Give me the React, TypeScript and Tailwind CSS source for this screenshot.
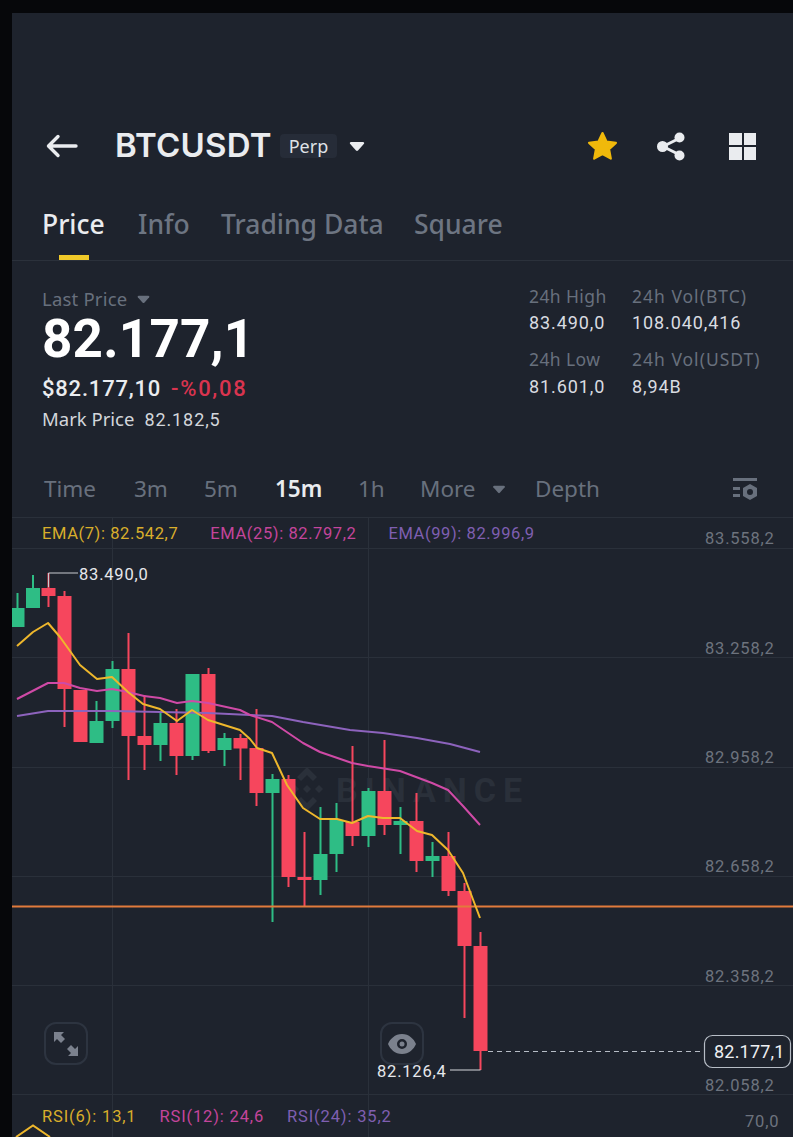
import React from "react";

type C = [number, number, number, number, number, 0 | 1];
const GREEN = "#2ebd85";
const RED = "#f6465d";
// x center, wick top, wick bottom, body top, body bottom, 1 = green
const candles: C[] = [
  [17.5, 593, 627, 608, 627, 1],
  [33, 575, 608, 588, 608, 1],
  [48.5, 573, 607, 588, 596, 0],
  [64.5, 591, 727, 596, 689, 0],
  [80.5, 690, 742, 690, 742, 0],
  [96.5, 701, 743, 721, 743, 1],
  [112.5, 661, 728, 669, 721, 1],
  [128.5, 633, 780, 669, 736, 0],
  [144.5, 695, 770, 736, 745, 0],
  [160.5, 713, 761, 723, 745, 1],
  [176.5, 709, 775, 723, 756, 0],
  [192.5, 674, 760, 674, 756, 1],
  [208.5, 668, 753, 674, 751, 0],
  [224.5, 733, 766, 738, 750, 1],
  [240.5, 734, 780, 738, 748.5, 0],
  [256.5, 709, 806, 748, 793, 0],
  [272.5, 774, 922, 779, 793, 1],
  [288.5, 775, 887, 779, 877, 0],
  [304.5, 832, 907, 877, 880, 0],
  [320.5, 807, 895, 854, 880, 1],
  [336.5, 803, 872, 820, 854, 1],
  [352.5, 746, 846, 822, 836, 0],
  [368.5, 788, 847, 791, 836, 1],
  [384.5, 740, 835, 791, 825, 0],
  [400.5, 807, 854, 821, 825, 1],
  [416.5, 793, 872, 821, 861, 0],
  [432.5, 842, 877, 856, 861, 1],
  [448.5, 832, 896, 856, 891, 0],
  [464.5, 883, 1018, 891, 946, 0],
  [480.5, 932, 1070, 946, 1051, 0],
];

const ema7 =
  "17,646 33,632 48,623 60,637 80,665 97,679 112,677 128,692 143,704 160,709 177,721 192,710 208,720 240,730 250,739 257,748 272,753 287,785 303,808 320,819 337,819 352,823 368,816 383,818 400,818 417,831 432,835 448,850 463,873 480,918";
const ema25 =
  "17,699 48,683 64,683 80,688 97,691 112,689 128,692 144,696 160,698 177,703 192,701 208,703 240,710 250,715 272,722 303,743 320,752 352,763 368,766 400,771 432,783 448,790 463,806 480,825";
const ema99 =
  "17,716 48,711 80,711 112,711 160,712 208,713 250,715 272,716 303,722 350,730 383,733 417,738 450,744 480,752";

const axis: [string, number][] = [
  ["83.558,2", 544],
  ["83.258,2", 654],
  ["82.958,2", 763],
  ["82.658,2", 872],
  ["82.358,2", 982],
  ["82.058,2", 1091],
];

const Caret = ({ className }: { className: string }) => (
  <svg viewBox="0 0 16 11" className={className} fill="currentColor">
    <path d="M2 1h12c1 0 1.500 1 1 1.700L9 9.500c-.6.600-1.400.600-2 0L1 2.700C.5 2 1 1 2 1z" />
  </svg>
);

function Chart() {
  return (
    <svg viewBox="12 517 781 620" className="absolute inset-0 w-[781px] h-[620px]">
      <g stroke="#2a303a" strokeWidth="1">
        <path d="M12 517.500H793M12 548.500H793M12 657.500H793M12 767.500H793M12 876.500H793M12 985.500H793M12 1094.500H793" fill="none" />
        <path d="M112.500 517V1137M368.500 517V1137" fill="none" />
      </g>
      <g fill="#2a303a">
        <path d="M307 767l10 10-4 4-6-6-6 6-4-4zM295 785l4 4-4 4-4-4zM319 785l4 4-4 4-4-4zM307 785l4 4-4 4-4-4zM307 811l-10-10 4-4 6 6 6-6 4 4z" />
        <text x="336" y="802" fontSize="34" fontWeight="700" letterSpacing="7" fontFamily="Roboto, sans-serif">BINANCE</text>
      </g>
      {candles.map(([x, wt, wb, bt, bb, g], i) => (
        <g key={i} fill={g ? GREEN : RED}>
          <rect x={x - 1} y={wt} width="2" height={wb - wt} />
          <rect x={x - 7} y={bt} width="14" height={bb - bt} />
        </g>
      ))}
      <path d="M12 906.500H793" stroke="#e17b3c" strokeWidth="2" fill="none" />
      <polyline points={ema99} fill="none" stroke="#8d63bd" strokeWidth="2" strokeLinejoin="round" />
      <polyline points={ema25} fill="none" stroke="#cf4aa6" strokeWidth="2" strokeLinejoin="round" />
      <polyline points={ema7} fill="none" stroke="#eeb72c" strokeWidth="2" strokeLinejoin="round" />
      <path d="M48.500 587V573H78" fill="none" stroke="#c8ccd2" strokeWidth="1" />
      <path d="M480.500 1070H450" fill="none" stroke="#d5d8dd" strokeWidth="1" />
      <path d="M488 1051.500H704" fill="none" stroke="#b7bdc6" strokeWidth="1" strokeDasharray="5 4" />
      <path d="M16 1137l17-11.500 17 11.500" fill="none" stroke="#eeb72c" strokeWidth="2" />
      <g fontFamily="Roboto, sans-serif" fontSize="16.500" letterSpacing="0.800">
        {axis.map(([t, y]) => (
          <text key={t} x="705" y={y} fill="#6d737e">{t}</text>
        ))}
        <text x="745" y="1127" fill="#6d737e">70,0</text>
        <text x="79" y="580" fill="#e6e8ec">83.490,0</text>
        <text x="377" y="1077" fill="#e6e8ec">82.126,4</text>
      </g>
      <rect x="704.500" y="1035.500" width="86" height="32" rx="8" fill="#1e232d" stroke="#b7bdc6" strokeWidth="1.200" />
      <text x="714" y="1058" fill="#eef0f3" fontSize="18" letterSpacing="0.200" fontFamily="Roboto, sans-serif">82.177,1</text>
    </svg>
  );
}

export default function App() {
  return (
    <div className="w-[793px] h-[1137px] bg-[#06070a] pt-[13px] pl-[12px] overflow-hidden font-['Noto_Sans',sans-serif]">
      <div className="w-[781px] h-[1124px] bg-[#1e232d] flex flex-col">
        {/* header */}
        <div className="mt-[113px] h-[40px] flex items-center pl-[34px] pr-[37px] text-[#eaecef]">
          <svg viewBox="0 0 32 24" className="w-[32px] h-[24px]" fill="none" stroke="currentColor" strokeWidth="3.400" strokeLinecap="round" strokeLinejoin="round">
            <path d="M30 12H3M12 2.500L2.500 12 12 21.500" />
          </svg>
          <span className="ml-[37px] w-[155px] text-[33px] font-semibold tracking-[0.2px] whitespace-nowrap font-['Inter',sans-serif]">BTCUSDT</span>
          <span className="ml-[10px] w-[57px] h-[24px] bg-[#262c38] rounded-sm flex items-center justify-center text-[18px] text-[#dfe2e7]">Perp</span>
          <Caret className="ml-[12px] w-[16px] h-[11px] text-[#eaecef]" />
          <div className="ml-auto flex items-center">
            <svg viewBox="0 0 24 24" className="w-[35px] h-[35px] text-[#f0b90b]" fill="currentColor" stroke="currentColor" strokeWidth="1.500" strokeLinejoin="round">
              <path d="M12 2.800l2.800 5.900 6.400.8-4.700 4.400 1.200 6.400L12 17.200l-5.700 3.100 1.200-6.400-4.700-4.400 6.400-.8z" />
            </svg>
            <svg viewBox="0 0 30 30" className="ml-[36px] w-[30px] h-[30px]" fill="currentColor" stroke="currentColor">
              <path d="M24 7L7 15.500 24 24" fill="none" strokeWidth="3" />
              <circle cx="23.500" cy="6.500" r="5" stroke="none" />
              <circle cx="6.500" cy="15.500" r="5.500" stroke="none" />
              <circle cx="23.500" cy="24.500" r="5" stroke="none" />
            </svg>
            <div className="ml-[43px] grid grid-cols-2 gap-[2px] w-[27px] h-[27px]">
              <div className="bg-[#eaecef]" />
              <div className="bg-[#eaecef]" />
              <div className="bg-[#eaecef]" />
              <div className="bg-[#eaecef]" />
            </div>
          </div>
        </div>

        {/* tabs */}
        <div className="mt-[40px] h-[55px] border-b border-[#2b313b] flex items-start pl-[30px] text-[26.500px] font-medium text-[#6d7582]">
          <div className="w-[96px] flex flex-col items-start">
            <span className="text-[#eaecef] h-[37px] leading-[37px]">Price</span>
            <span className="ml-[17px] mt-[12px] w-[30px] h-[5px] bg-[#f0c929]" />
          </div>
          <span className="w-[83px] h-[37px] leading-[37px]">Info</span>
          <span className="w-[193px] h-[37px] leading-[37px]">Trading Data</span>
          <span className="h-[37px] leading-[37px]">Square</span>
        </div>

        {/* stats */}
        <div className="h-[184px] flex pl-[30px] font-['Roboto',sans-serif]">
          <div className="w-[487px] pt-[25px]">
            <div className="flex items-center h-[26px] font-['Noto_Sans',sans-serif] text-[18.500px] tracking-[0.2px] text-[#68707d]">
              Last Price
              <Caret className="ml-[10px] w-[13px] h-[9px] text-[#68707d]" />
            </div>
            <div className="mt-[2px] h-[50px] leading-[50px] text-[53px] font-bold text-white tracking-[0.2px]">82.177,1</div>
            <div className="mt-[11px] h-[26px] flex items-center text-[22px] font-medium tracking-[0.800px]">
              <span className="text-[#eaecef]">$82.177,10</span>
              <span className="ml-[10px] text-[#d9344f] tracking-[1.700px]">-%0,08</span>
            </div>
            <div className="mt-[5px] h-[26px] flex items-center text-[18px] text-[#d3d6db]">
              <span className="font-['Noto_Sans',sans-serif] text-[18.500px]">Mark Price</span>
              <span className="ml-[10px] tracking-[0.900px]">82.182,5</span>
            </div>
          </div>
          <div className="grid grid-cols-[103px_auto] content-start pt-[22px] text-[18px] tracking-[0.900px] text-[#d9dce1]">
            <span className="h-[26px] text-[#68707d] font-['Noto_Sans',sans-serif] text-[17.500px] tracking-[0.400px]">24h High</span>
            <span className="h-[26px] text-[#68707d] font-['Noto_Sans',sans-serif] text-[17.500px] tracking-[1px]">24h Vol(BTC)</span>
            <span className="h-[37px]">83.490,0</span>
            <span className="h-[37px]">108.040,416</span>
            <span className="h-[27px] text-[#68707d] font-['Noto_Sans',sans-serif] text-[17.500px] tracking-[0.400px]">24h Low</span>
            <span className="h-[27px] text-[#68707d] font-['Noto_Sans',sans-serif] text-[17.500px] tracking-[1px]">24h Vol(USDT)</span>
            <span>81.601,0</span>
            <span>8,94B</span>
          </div>
        </div>

        {/* timeframes */}
        <div className="h-[72px] pt-[16px] flex items-center pl-[32px] pr-[35px] text-[22.500px] text-[#68707d]">
          <span className="w-[90px]">Time</span>
          <span className="w-[70px]">3m</span>
          <span className="w-[71px]">5m</span>
          <span className="w-[83px] text-[#eaecef] font-semibold">15m</span>
          <span className="w-[62px]">1h</span>
          <span className="w-[72px]">More</span>
          <Caret className="w-[14px] h-[9px]" />
          <span className="ml-[29px]">Depth</span>
          <svg viewBox="0 0 26 24" className="ml-auto w-[26px] h-[24px]" fill="currentColor">
            <rect x="1" y="1" width="24" height="3" />
            <rect x="1" y="10" width="7" height="3" />
            <rect x="1" y="17" width="7" height="3" />
            <path fillRule="evenodd" d="M18 7l7 4v8l-7 4-7-4v-8zM18 12a3 3 0 100 6 3 3 0 000-6z" />
          </svg>
        </div>

        {/* chart */}
        <div className="relative flex-1 font-['Roboto',sans-serif]">
          <Chart />
          <div className="absolute left-[30px] top-[5px] flex gap-[32px] text-[16.500px] tracking-[0.600px]">
            <span className="text-[#d9ae2b]">EMA(7): 82.542,7</span>
            <span className="text-[#c4459b]">EMA(25): 82.797,2</span>
            <span className="text-[#7f5fb1]">EMA(99): 82.996,9</span>
          </div>
          <div className="absolute left-[32px] top-[505px] w-[44px] h-[43px] rounded-xl border-2 border-[#2d3440] flex items-center justify-center text-[#7b818d]">
            <svg viewBox="0 0 26 26" className="w-[26px] h-[26px]" fill="currentColor">
              <path d="M1 1h10l-3 3 4 4-4 4-4-4-3 3zM25 25H15l3-3-4-4 4-4 4 4 3-3z" />
            </svg>
          </div>
          <div className="absolute left-[368px] top-[505px] w-[44px] h-[43px] rounded-xl border-2 border-[#2d3440] flex items-center justify-center text-[#7b818d]">
            <svg viewBox="0 0 30 22" className="w-[30px] h-[22px]" fill="currentColor">
              <path fillRule="evenodd" d="M15 1C8 1 3 6 1 11c2 5 7 10 14 10s12-5 14-10C27 6 22 1 15 1zm0 5a5 5 0 110 10 5 5 0 010-10z" />
              <circle cx="15" cy="11" r="2.500" />
            </svg>
          </div>
          <div className="absolute left-[30px] top-[588px] flex gap-[23px] text-[16.500px] tracking-[0.850px]">
            <span className="text-[#d9ae2b]">RSI(6): 13,1</span>
            <span className="text-[#c4459b]">RSI(12): 24,6</span>
            <span className="text-[#7f5fb1]">RSI(24): 35,2</span>
          </div>
        </div>
      </div>
    </div>
  );
}
